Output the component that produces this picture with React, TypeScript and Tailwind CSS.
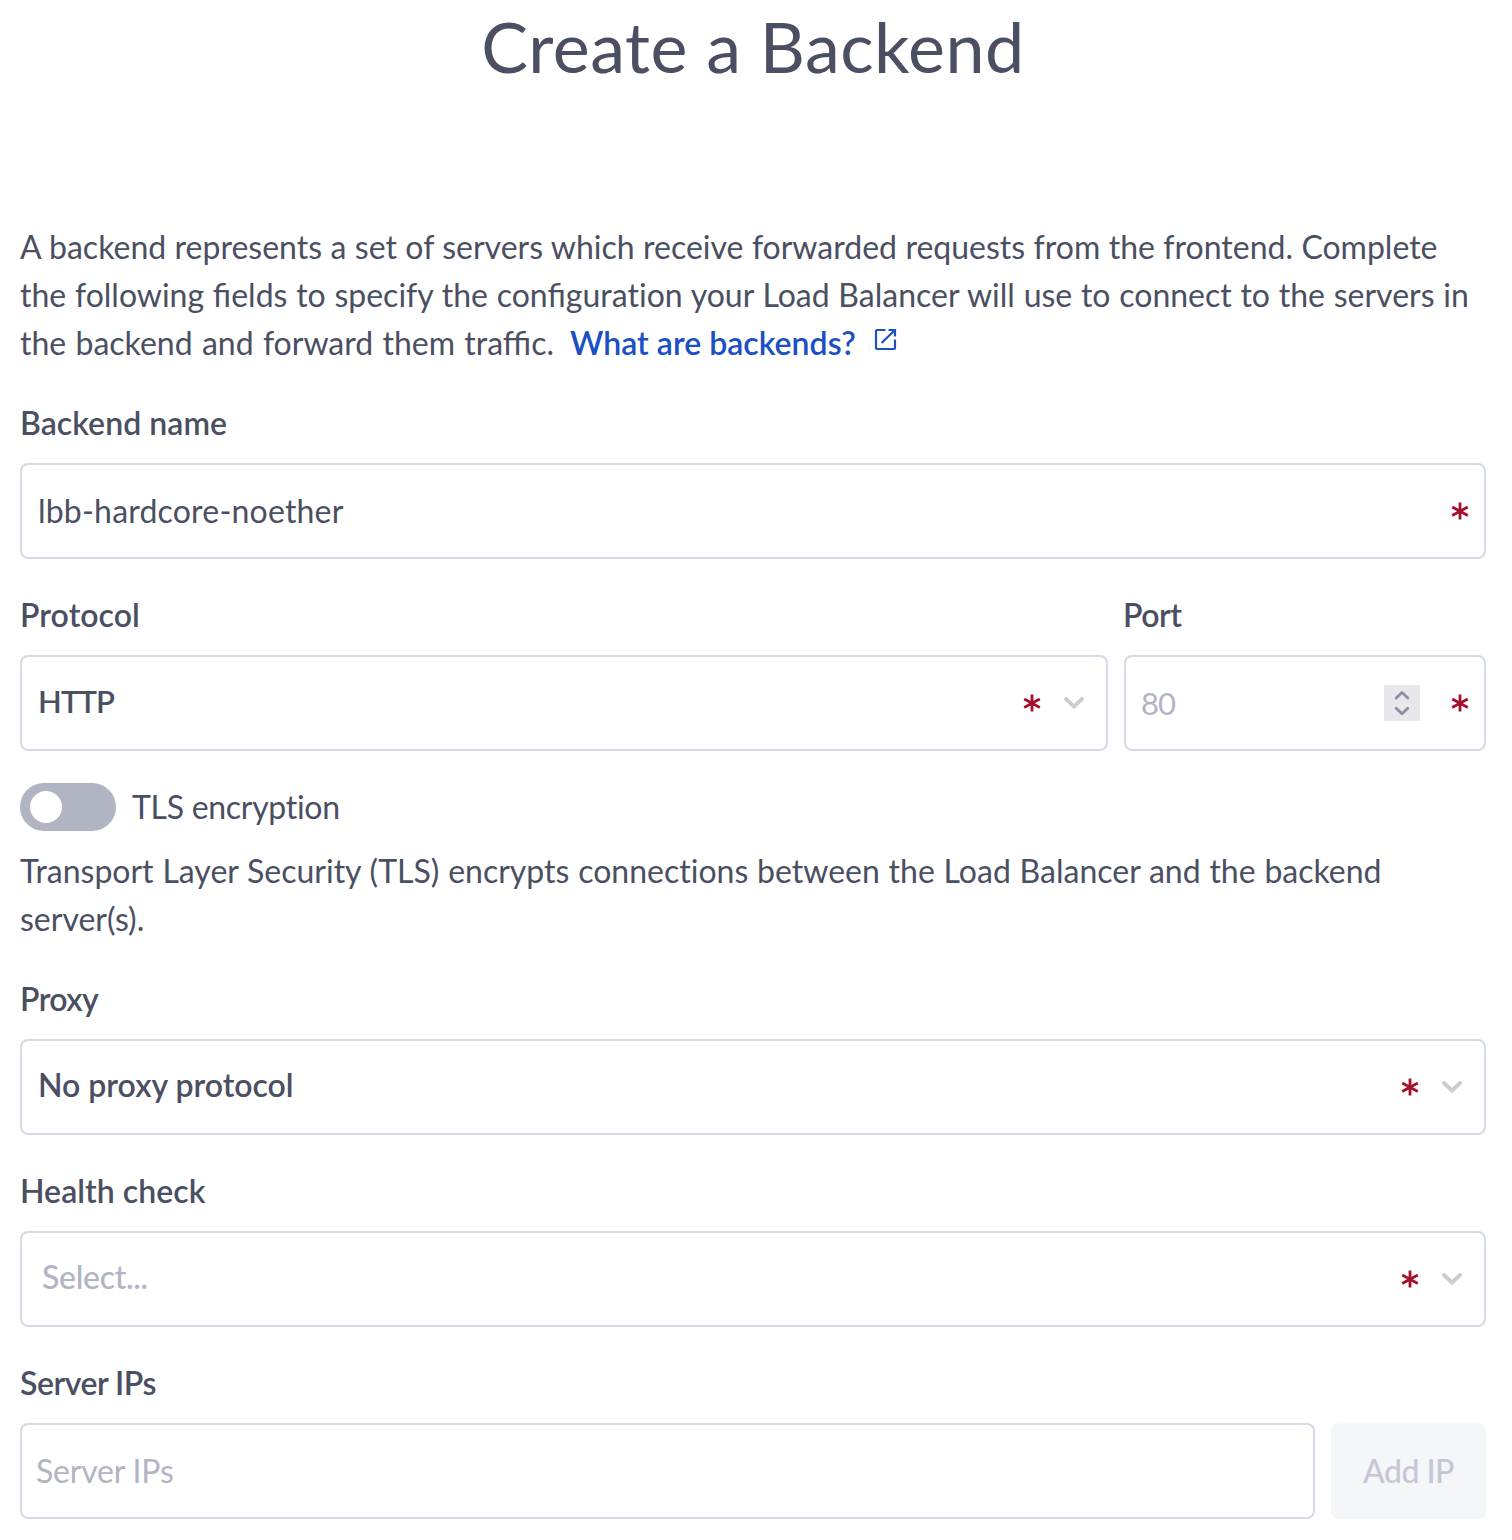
import type { ReactNode } from 'react';

function Required() {
  return (
    <svg className="size-[18px] shrink-0" viewBox="0 0 18 18" fill="none" stroke="#a5102d" strokeWidth="2.8">
      <path d="M9 .5V17.5M1.2 5L16.8 13.4M16.8 5L1.2 13.4" />
    </svg>
  );
}

function Chevron() {
  return (
    <svg className="h-[14px] w-[22px] shrink-0" viewBox="0 0 22 14" fill="none" stroke="#cccccc" strokeWidth="4" strokeLinecap="round" strokeLinejoin="round">
      <path d="M3 3L11 10.6L19 3" />
    </svg>
  );
}

function Spinner() {
  return (
    <svg className="size-9 shrink-0" viewBox="0 0 36 36" fill="none" stroke="#8f8d9e" strokeWidth="2.8" strokeLinecap="round" strokeLinejoin="round">
      <rect width="36" height="36" fill="#e8e7ec" stroke="none" />
      <path d="M12.2 13L18 7.4L23.8 13M12.2 23.2L18 28.8L23.8 23.2" />
    </svg>
  );
}

function ExternalLink() {
  return (
    <svg className="ml-[17px] inline-block size-[24px] align-[4px]" viewBox="0 0 24 24" fill="none" stroke="#1b4fc4" strokeWidth="2.2">
      <path d="M12.5 3H4Q3 3 3 4V21Q3 22 4 22H21Q22 22 22 21V12.5M15.5 3H22V9.5M22 3L8.5 16" />
    </svg>
  );
}

/** Keeps "t" and "i" as two separate letters. */
function Ti() {
  return <span className="[font-variant-ligatures:none]">ti</span>;
}

function Label({ children, className = 'tracking-[0.05px]' }: { children: ReactNode; className?: string }) {
  return <div className={`mb-4 font-semibold ${className}`}>{children}</div>;
}

function Box({ children, className = '' }: { children: ReactNode; className?: string }) {
  return <div className={`flex h-24 items-center rounded-lg border-2 border-[#d4dae8] bg-white ${className}`}>{children}</div>;
}

function Select({ children }: { children: ReactNode }) {
  return (
    <Box className="pl-4 pr-[21px]">
      <div className="flex-1 pb-1">{children}</div>
      <Required />
      <div className="w-[22px]" />
      <Chevron />
    </Box>
  );
}

export default function App() {
  return (
    <main className="h-[1540px] bg-white pl-5 pr-[26px] pt-1 font-['Lato',sans-serif] text-[32px] leading-[48px] text-[#4a4f62]">
      <h1 className="text-center text-[70px] leading-[84px] tracking-[0.45px]">Create a Backend</h1>

      <p className="mt-[135px] whitespace-nowrap">
        <span className="[word-spacing:0.25px]">
          A backend represents a set of servers which receive forwarded requests from the frontend. Complete
        </span>
        <br />
        <span className="[word-spacing:0.55px]">
          the following fields to specify the configura<Ti />on your Load Balancer will use to connect to the servers in
        </span>
        <br />
        <span className="[word-spacing:1.1px]">the backend and forward them traffic.</span>
        <a className="ml-4 font-semibold tracking-[0.02px] text-[#1b4fc4]">What are backends?</a>
        <ExternalLink />
      </p>

      <section className="mt-8">
        <Label>Backend name</Label>
        <Box className="pl-4 pr-[15px]">
          <div className="flex-1 tracking-[0.2px]">lbb-hardcore-noether</div>
          <Required />
        </Box>
      </section>

      <section className="mt-8 flex gap-4">
        <div className="w-[1088px]">
          <Label>Protocol</Label>
          <Select>
            <span className="text-[31px] font-semibold tracking-[-0.9px]">HTTP</span>
          </Select>
        </div>
        <div className="flex-1">
          <Label className="-ml-px tracking-[-0.5px]">Port</Label>
          <Box className="px-[15px]">
            <div className="flex-1 text-[31px] tracking-[-1px] text-[#b1b5c3]">80</div>
            <Spinner />
            <div className="w-[31px]" />
            <Required />
          </Box>
        </div>
      </section>

      <section className="mt-8">
        <div className="flex items-center gap-4">
          <div className="flex h-12 w-24 items-center rounded-full bg-[#b1b5c3] pl-[10px]">
            <div className="size-8 rounded-full bg-white" />
          </div>
          <span className="tracking-[-0.3px]">TLS encryption</span>
        </div>
        <p className="mt-4 [word-spacing:0.6px]">
          Transport Layer Security (TLS) encrypts connec<Ti />ons between the Load Balancer and the backend
          <br />
          server(s).
        </p>
      </section>

      <section className="mt-8">
        <Label className="tracking-[-0.6px]">Proxy</Label>
        <Select>
          <span className="font-semibold">No proxy protocol</span>
        </Select>
      </section>

      <section className="mt-8">
        <Label>Health check</Label>
        <Select>
          <span className="pl-1 font-medium tracking-[-0.3px] text-[#b1b5c3]">Select...</span>
        </Select>
      </section>

      <section className="mt-8">
        <Label className="tracking-[-0.5px]">Server IPs</Label>
        <div className="flex gap-4">
          <Box className="w-[1295px] pl-[14px]">
            <span className="tracking-[-0.2px] text-[#b1b5c3]">Server IPs</span>
          </Box>
          <button className="h-24 flex-1 rounded-lg bg-[#f5f6f8] font-medium tracking-[-0.5px] text-[#c3c8d6]">Add IP</button>
        </div>
      </section>
    </main>
  );
}
